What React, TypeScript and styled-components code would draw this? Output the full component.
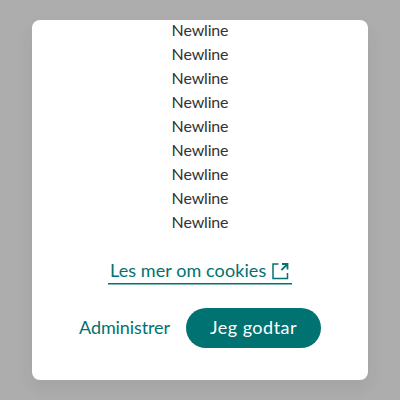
import React from "react";
import styled, { createGlobalStyle } from "styled-components";

const GlobalStyle = createGlobalStyle`
  *, *::before, *::after { box-sizing: border-box; }
  html, body { margin: 0; padding: 0; overflow: hidden; }
`;

const Overlay = styled.div`
  display: flex;
  align-items: center;
  justify-content: center;
  width: 100%;
  height: 100vh;
  padding: 20px 32px;
  background: #adadad;
  font-family: Lato, "Open Sans", sans-serif;
`;

const Dialog = styled.section`
  display: flex;
  flex-direction: column;
  justify-content: flex-end;
  align-items: center;
  width: 336px;
  height: 360px;
  padding-bottom: 32px;
  border-radius: 8px;
  background: #fff;
  box-shadow: 0 8px 16px rgba(51, 51, 51, 0.08);
  overflow: hidden;
`;

const Lines = styled.div`
  flex: none;
  color: #333;
  text-align: center;
`;

const Line = styled.p`
  margin: 0;
  font-size: 16px;
  line-height: 24px;
  letter-spacing: -0.16px;
`;

const MoreLink = styled.a`
  display: flex;
  flex: none;
  align-items: center;
  gap: 5px;
  height: 26px;
  margin-top: 25px;
  padding: 0 3px 2px 2px;
  color: #007272;
  font-size: 18px;
  white-space: nowrap;
  text-decoration: none;
  box-shadow: inset 0 -1px 0 rgba(255, 255, 255, 0.5), inset 0 -2px 0 #007272;
`;

const LinkText = styled.span`
  width: 157px;
  height: 24px;
  line-height: 22px;
  letter-spacing: 0.08px;
`;

const Actions = styled.div`
  display: flex;
  flex: none;
  gap: 16px;
  margin-top: 23px;
`;

const Button = styled.button<{ $primary?: boolean }>`
  width: ${(p) => (p.$primary ? "135px" : "91px")};
  height: 40px;
  padding: 0 0 2px;
  border: 0;
  border-radius: 20px;
  background: ${(p) => (p.$primary ? "#007272" : "transparent")};
  color: ${(p) => (p.$primary ? "#fff" : "#007272")};
  font-family: inherit;
  font-size: 18px;
  line-height: 24px;
  letter-spacing: ${(p) => (p.$primary ? "0.5px" : "-0.1px")};
  white-space: nowrap;
`;

const LaunchIcon = () => (
  <svg width="17" height="17" viewBox="0 0 17 17" fill="none" stroke="#007272" strokeWidth="1.5">
    <path d="M6.5 1H1V15.5H15.5V10" />
    <path d="M10 1H15.5V6.5M15.5 1L9.4 7.1" strokeWidth="1.8" />
  </svg>
);

const lines = Array.from({ length: 9 }, () => "Newline");

export default function App() {
  return (
    <>
      <GlobalStyle />
      <Overlay>
        <Dialog role="dialog">
          <Lines>
            {lines.map((text, i) => (
              <Line key={i}>{text}</Line>
            ))}
          </Lines>
          <MoreLink>
            <LinkText>Les mer om cookies</LinkText>
            <LaunchIcon />
          </MoreLink>
          <Actions>
            <Button>Administrer</Button>
            <Button $primary>Jeg godtar</Button>
          </Actions>
        </Dialog>
      </Overlay>
    </>
  );
}
